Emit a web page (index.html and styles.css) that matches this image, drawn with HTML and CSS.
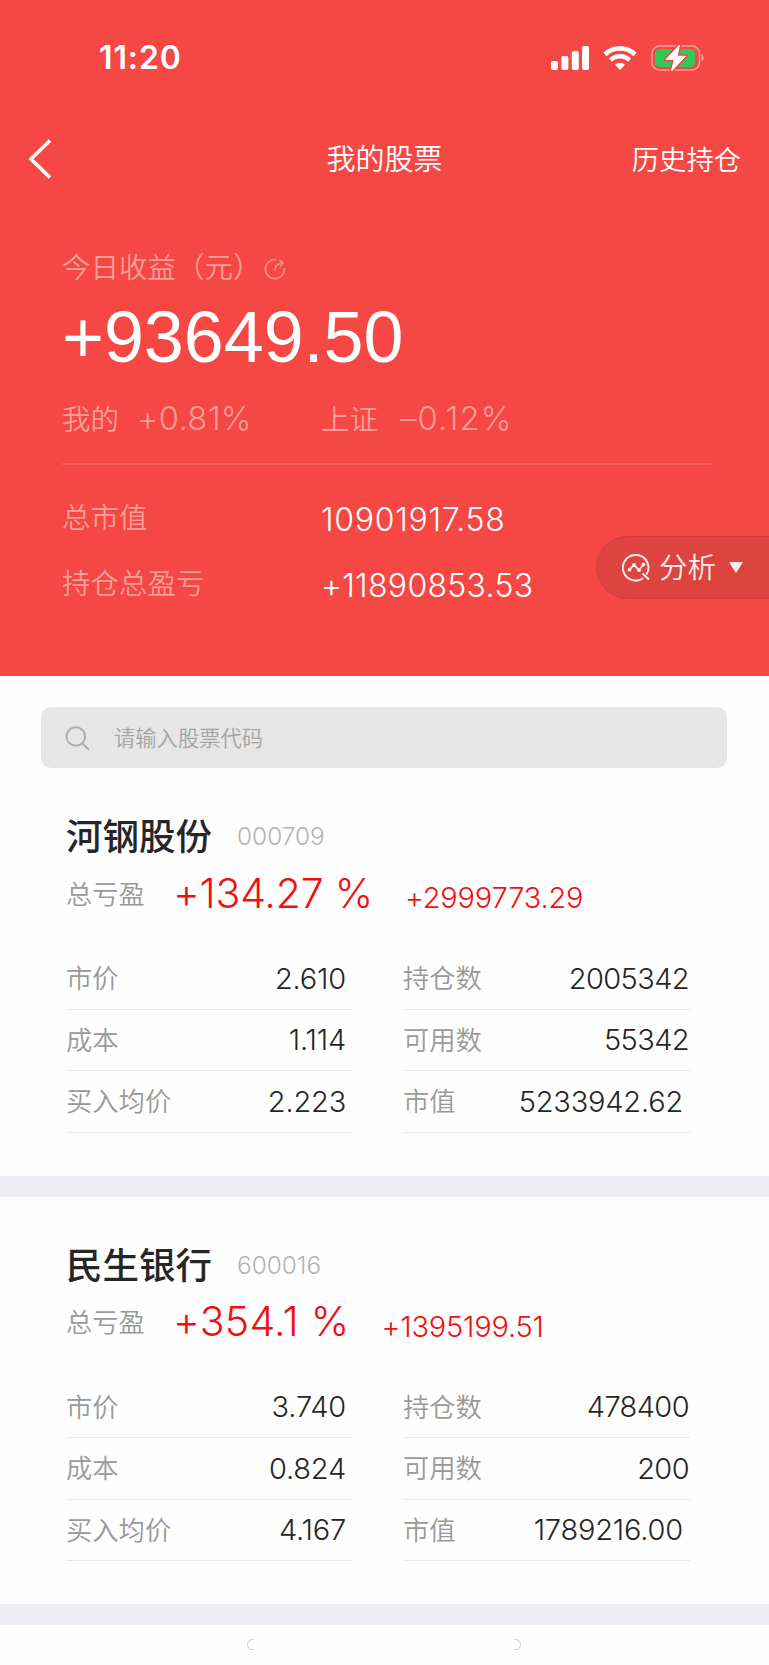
FILE: index.html
```html
<!DOCTYPE html>
<html lang="zh-CN">
<head>
  <meta charset="UTF-8">
  <meta name="viewport" content="width=device-width, initial-scale=1.0">
  <title>我的股票</title>
  <link rel="stylesheet" href="styles.css">
</head>
<body>

  <header class="top">
    <div class="status-bar">
      <span class="time">11:20</span>
      <svg class="signal" width="38" height="26" viewBox="0 0 38 26" fill="#fff">
        <rect x="0" y="16" width="7" height="9" rx="2"/>
        <rect x="10.4" y="11" width="7" height="14" rx="2"/>
        <rect x="20.8" y="6" width="7" height="19" rx="2"/>
        <rect x="31" y="1" width="7" height="24" rx="2"/>
      </svg>
      <svg class="wifi" width="34" height="26" viewBox="0 0 34 26" fill="none" stroke="#fff">
        <path d="M2 9.500a21.500 21.500 0 0 1 30 0" stroke-width="4.600"/>
        <path d="M7.400 15.200a13.800 13.800 0 0 1 19.200 0" stroke-width="4.400"/>
        <path d="M17 25l-5-5.200a7.200 7.200 0 0 1 10 0z" fill="#fff" stroke="none"/>
      </svg>
      <svg class="battery" width="56" height="28" viewBox="0 0 56 28">
        <rect x="2" y="2" width="47.500" height="24" rx="7.500" fill="none" stroke="#fb9c97" stroke-width="1.600"/>
        <path d="M51.500 10.500c3 1 3 6 0 7z" fill="#fb9c97"/>
        <rect x="5" y="5" width="40" height="18" rx="4.500" fill="#32c759"/>
        <path d="M29.500 1L16 15.500h8.300L21.500 27 35.500 12.300h-8.400z" fill="#fff" stroke="#f54743" stroke-width="4" stroke-linejoin="round"/>
        <path d="M29.500 1L16 15.500h8.300L21.500 27 35.500 12.300h-8.400z" fill="#fff" stroke="#fff" stroke-width="1" stroke-linejoin="round"/>
      </svg>
    </div>

    <nav class="nav">
      <svg class="back" width="24" height="40" viewBox="0 0 24 40" fill="none" stroke="#fff" stroke-width="3.600">
        <path d="M22 1.500L3 20l19 18.500"/>
      </svg>
      <h1>我的股票</h1>
      <a class="history">历史持仓</a>
    </nav>

    <section class="summary">
      <div class="today">
        <span>今日收益（元）</span>
        <svg width="22" height="22" viewBox="0 0 22 22" fill="none" stroke="#fa8984" stroke-width="1.700">
          <path d="M12.500 1.700A9.500 9.500 0 1 0 20.300 10"/>
          <path d="M11 12.500c0-4 2-7 7.500-7.500M15.500 2l3.500 3-2.800 3.800"/>
        </svg>
      </div>
      <div class="income">+93649.50</div>
      <div class="compare">
        <div class="compare-item"><span>我的</span><span class="rate">+0.81%</span></div>
        <div class="compare-item index"><span>上证</span><span class="rate">–0.12%</span></div>
      </div>
      <dl class="totals">
        <dt>总市值</dt><dd class="market">10901917.58</dd>
        <dt>持仓总盈亏</dt><dd>+11890853.53</dd>
      </dl>
    </section>

    <button class="analysis" type="button">
      <svg width="29" height="29" viewBox="0 0 29 29" fill="none" stroke="#fdece9" stroke-width="2">
        <path d="M21 25.200A12.800 12.800 0 1 1 24.500 21.500"/>
        <path d="M20.500 20.500l6.500 6" stroke-width="2.300"/>
        <path d="M7.500 16.500l4.500-4.500 5 5 4.500-5.500" stroke-width="1.800"/>
        <g fill="#fdece9" stroke="none">
          <circle cx="7.500" cy="16.700" r="1.900"/>
          <circle cx="12" cy="11.800" r="1.900"/>
          <circle cx="17" cy="17.200" r="1.900"/>
          <circle cx="21.500" cy="11.500" r="1.900"/>
        </g>
      </svg>
      <span>分析</span>
      <svg width="14" height="11" viewBox="0 0 14 11" fill="#fdece9"><path d="M1 0h12q1 0 .4 1L7.800 10q-.8 1-1.600 0L.6 1Q0 0 1 0z"/></svg>
    </button>
  </header>

  <main>
    <div class="search">
      <svg width="26" height="26" viewBox="0 0 26 26" fill="none" stroke="#b0b0b0" stroke-width="2">
        <circle cx="10.800" cy="11.500" r="9.300"/>
        <path d="M17.500 18.500l6.500 6.300"/>
      </svg>
      <span>请输入股票代码</span>
    </div>

    <section class="stock">
      <div class="stock-head">
        <h2>河钢股份</h2>
        <span class="code">000709</span>
      </div>
      <div class="profit">
        <span class="label">总亏盈</span>
        <span class="percent">+134.27 %</span>
        <span class="amount">+2999773.29</span>
      </div>
      <div class="grid">
        <div class="cell"><span>市价</span><b class="decimal">2.610</b></div>
        <div class="cell"><span>持仓数</span><b>2005342</b></div>
        <div class="cell"><span>成本</span><b class="decimal">1.114</b></div>
        <div class="cell"><span>可用数</span><b>55342</b></div>
        <div class="cell"><span>买入均价</span><b class="decimal">2.223</b></div>
        <div class="cell"><span>市值</span><b class="decimal">5233942.62</b></div>
      </div>
    </section>

    <section class="stock">
      <div class="stock-head">
        <h2>民生银行</h2>
        <span class="code">600016</span>
      </div>
      <div class="profit">
        <span class="label">总亏盈</span>
        <span class="percent short">+354.1 %</span>
        <span class="amount">+1395199.51</span>
      </div>
      <div class="grid">
        <div class="cell"><span>市价</span><b class="decimal">3.740</b></div>
        <div class="cell"><span>持仓数</span><b>478400</b></div>
        <div class="cell"><span>成本</span><b class="decimal">0.824</b></div>
        <div class="cell"><span>可用数</span><b>200</b></div>
        <div class="cell"><span>买入均价</span><b class="decimal">4.167</b></div>
        <div class="cell"><span>市值</span><b class="decimal">1789216.00</b></div>
      </div>
    </section>
  </main>

  <svg class="home-indicator" width="274" height="11" viewBox="0 0 274 11" fill="none" stroke="#c8c8c8">
    <path d="M7 .5H5.500a5 5 0 0 0 0 10H7M267 .5h1.500a5 5 0 0 1 0 10H267"/>
  </svg>

</body>
</html>
```

FILE: styles.css
```css
* {
  margin: 0;
  padding: 0;
  box-sizing: border-box;
}

body {
  width: 769px;
  height: 1665px;
  overflow: hidden;
  font-family: Inter, "Noto Sans CJK SC", sans-serif;
  font-weight: 350;
  line-height: 1.2;
  background-color: #fefefe;
  color: #262626;
  white-space: nowrap;
}

svg {
  display: block;
  flex-shrink: 0;
}

/* 顶部红色区域 */
.top {
  position: relative;
  height: 676px;
  background-color: #f54743;
  color: #fff;
}

.status-bar {
  display: flex;
  align-items: center;
  height: 115px;
  padding: 0 63px 0 99px;
}

.time {
  flex: 1;
  padding-top: 2px;
  font-size: 32px;
  font-weight: 600;
  letter-spacing: 0.9px;
}

.wifi {
  margin-left: 14px;
}

.battery {
  margin-left: 13px;
}

.nav {
  display: grid;
  grid-template-columns: 1fr auto 1fr;
  align-items: center;
  height: 88px;
  padding: 0 28px;
}

.nav h1 {
  padding-top: 3px;
  font-size: 29px;
  font-weight: 350;
}

.history {
  justify-self: end;
  padding-top: 4px;
  font-size: 27.3px;
}

.summary {
  padding: 44px 57px 0 62px;
  color: #fb9c97;
  font-size: 28.5px;
}

.today {
  display: flex;
  align-items: center;
  height: 40px;
}

.today span {
  padding-top: 3px;
}

.today svg {
  margin: 4px 0 0 2px;
}

.income {
  height: 100px;
  line-height: 100px;
  font-family: "Liberation Sans", sans-serif;
  font-size: 71.8px;
  color: #fff;
}

.compare {
  display: grid;
  grid-template-columns: 259px 1fr;
  align-items: center;
  height: 78px;
  padding-bottom: 12px;
  border-bottom: 2px solid #f85b58;
}

.compare-item {
  display: flex;
  align-items: center;
  gap: 18px;
}

.compare-item span:first-child {
  padding-top: 2px;
}

.rate {
  font-size: 32.8px;
  letter-spacing: 0.3px;
}

.index {
  gap: 22px;
}

.index .rate {
  letter-spacing: 1.1px;
}

.totals {
  display: grid;
  grid-template-columns: 259px 1fr;
  grid-auto-rows: 66px;
  align-items: center;
  padding-top: 20px;
}

.totals dd {
  padding-top: 5px;
  font-size: 32px;
  letter-spacing: 0.3px;
  color: #fff;
}

.totals .market {
  letter-spacing: 0.7px;
}

.analysis {
  position: absolute;
  top: 536px;
  right: -2px;
  display: flex;
  align-items: center;
  width: 175px;
  height: 63px;
  padding-left: 25px;
  border: 1px solid #d03e3a;
  border-radius: 32px 0 0 32px;
  background-color: #de443f;
  font: inherit;
  font-size: 28.5px;
  color: #fdece9;
}

.analysis span {
  margin: 0 13px 0 8px;
  padding-top: 1px;
}

.search {
  display: flex;
  align-items: center;
  gap: 23px;
  height: 61px;
  margin: 31px 42px 0 41px;
  padding-left: 24px;
  border-radius: 10px;
  background-color: #e6e6e6;
  font-size: 21.3px;
  color: #a3a3a3;
}

.search span {
  padding-top: 2px;
}

/* 股票卡片 */
.stock {
  height: 428.5px;
  padding: 38px 77px 0 66px;
  border-bottom: 21px solid #eeedf3;
}

.stock-head {
  display: flex;
  align-items: center;
  height: 60px;
  gap: 25px;
}

.stock-head h2 {
  padding-top: 4px;
  font-size: 36.5px;
  font-weight: 500;
}

.code {
  padding-top: 2px;
  font-size: 24.4px;
  color: #b3b3b3;
}

.profit {
  display: flex;
  align-items: center;
  height: 55px;
}

.profit .label {
  width: 107px;
  padding-top: 2px;
  font-size: 26.3px;
  color: #999;
}

.percent {
  font-size: 41px;
  letter-spacing: -0.2px;
  color: #f01010;
}

.percent.short {
  letter-spacing: 0.3px;
}

.amount {
  margin-left: 32px;
  padding-top: 10px;
  font-size: 29px;
  letter-spacing: -0.2px;
  color: #f01010;
}

.grid {
  display: grid;
  grid-template-columns: 287px 287px;
  column-gap: 50px;
  grid-auto-rows: 61.5px;
  padding-top: 27px;
}

.cell {
  display: flex;
  align-items: center;
  justify-content: space-between;
  padding: 2px 7px 0 0;
  border-bottom: 1px solid #e9e9e9;
  font-size: 26.3px;
  color: #999;
}

.cell:nth-child(even) {
  padding-right: 1px;
}

.cell:last-child {
  padding-right: 7px;
}

.cell b {
  font-size: 29px;
  font-weight: 350;
  letter-spacing: -0.6px;
  color: #262626;
}

.cell .decimal {
  letter-spacing: -0.2px;
}

.home-indicator {
  margin: 14px 0 0 247px;
}
```
